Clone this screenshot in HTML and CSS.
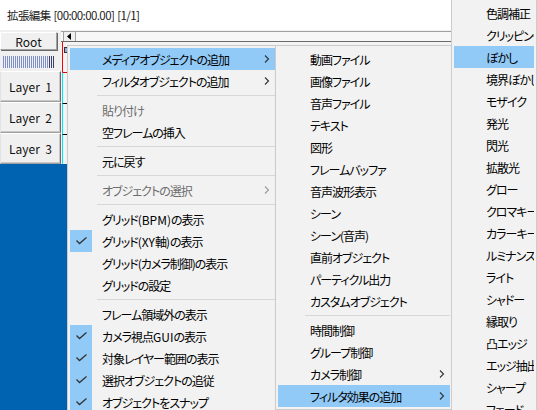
FILE: index.html
```html
<!DOCTYPE html>
<html lang="ja">
<head>
<meta charset="utf-8">
<title>拡張編集</title>
<link rel="stylesheet" href="styles.css">
</head>
<body>
<div class="window">
  <div class="titlebar">拡張編集 [00:00:00.00] [1/1]</div>
  <div class="client">
    <div class="layers">
      <div class="root-btn">Root</div>
      <div class="meter"></div>
      <div class="layer-btn">Layer&nbsp; 1</div>
      <div class="layer-btn">Layer&nbsp; 2</div>
      <div class="layer-btn">Layer&nbsp; 3</div>
    </div>
    <div class="timeline">
      <div class="hscroll">
        <div class="arrow-btn"><svg width="5" height="7" viewBox="0 0 5 7"><path d="M4 0 L0 3.5 L4 7 Z" fill="#000"/></svg></div>
        <div class="track"></div>
      </div>
      <div class="tracks">
        <div class="ruler"><span class="marker"></span></div>
        <div class="lane lane-first"></div>
        <div class="lane"></div>
        <div class="lane lane-last"></div>
      </div>
    </div>
  </div>
</div>

<div class="menu menu-main">
  <div class="item hot"><span class="ck"></span><span class="tx">メディアオブジェクトの追加</span><span class="ar"><svg width="16" height="22" viewBox="0 0 16 22"><path d="M6 7.5 L9.5 11 L6 14.5" fill="none" stroke="#333" stroke-width="1.1"/></svg></span></div>
  <div class="item"><span class="ck"></span><span class="tx">フィルタオブジェクトの追加</span><span class="ar"><svg width="16" height="22" viewBox="0 0 16 22"><path d="M6 7.5 L9.5 11 L6 14.5" fill="none" stroke="#333" stroke-width="1.1"/></svg></span></div>
  <div class="sep"></div>
  <div class="item dis"><span class="ck"></span><span class="tx">貼り付け</span><span class="ar"></span></div>
  <div class="item"><span class="ck"></span><span class="tx">空フレームの挿入</span><span class="ar"></span></div>
  <div class="sep"></div>
  <div class="item"><span class="ck"></span><span class="tx">元に戻す</span><span class="ar"></span></div>
  <div class="sep"></div>
  <div class="item dis"><span class="ck"></span><span class="tx">オブジェクトの選択</span><span class="ar"><svg width="16" height="22" viewBox="0 0 16 22"><path d="M6 7.5 L9.5 11 L6 14.5" fill="none" stroke="#9a9a9a" stroke-width="1.1"/></svg></span></div>
  <div class="sep"></div>
  <div class="item"><span class="ck"></span><span class="tx">グリッド<span class="lat">(BPM)</span>の表示</span><span class="ar"></span></div>
  <div class="item"><span class="ck on"><svg width="22" height="22" viewBox="0 0 22 22"><path d="M6.5 10.5 L9.5 13.5 L16.5 7.5" fill="none" stroke="#333" stroke-width="1.3"/></svg></span><span class="tx">グリッド<span class="lat">(XY</span>軸<span class="lat">)</span>の表示</span><span class="ar"></span></div>
  <div class="item"><span class="ck"></span><span class="tx">グリッド(カメラ制御)の表示</span><span class="ar"></span></div>
  <div class="item"><span class="ck"></span><span class="tx">グリッドの設定</span><span class="ar"></span></div>
  <div class="sep"></div>
  <div class="item"><span class="ck"></span><span class="tx">フレーム領域外の表示</span><span class="ar"></span></div>
  <div class="item"><span class="ck on"><svg width="22" height="22" viewBox="0 0 22 22"><path d="M6.5 10.5 L9.5 13.5 L16.5 7.5" fill="none" stroke="#333" stroke-width="1.3"/></svg></span><span class="tx">カメラ視点<span class="lat">GUI</span>の表示</span><span class="ar"></span></div>
  <div class="item"><span class="ck on"><svg width="22" height="22" viewBox="0 0 22 22"><path d="M6.5 10.5 L9.5 13.5 L16.5 7.5" fill="none" stroke="#333" stroke-width="1.3"/></svg></span><span class="tx">対象レイヤー範囲の表示</span><span class="ar"></span></div>
  <div class="item"><span class="ck on"><svg width="22" height="22" viewBox="0 0 22 22"><path d="M6.5 10.5 L9.5 13.5 L16.5 7.5" fill="none" stroke="#333" stroke-width="1.3"/></svg></span><span class="tx">選択オブジェクトの追従</span><span class="ar"></span></div>
  <div class="item"><span class="ck on"><svg width="22" height="22" viewBox="0 0 22 22"><path d="M6.5 10.5 L9.5 13.5 L16.5 7.5" fill="none" stroke="#333" stroke-width="1.3"/></svg></span><span class="tx">オブジェクトをスナップ</span><span class="ar"></span></div>
</div>

<div class="menu menu-media">
  <div class="item"><span class="ck"></span><span class="tx">動画ファイル</span><span class="ar"></span></div>
  <div class="item"><span class="ck"></span><span class="tx">画像ファイル</span><span class="ar"></span></div>
  <div class="item"><span class="ck"></span><span class="tx">音声ファイル</span><span class="ar"></span></div>
  <div class="item"><span class="ck"></span><span class="tx">テキスト</span><span class="ar"></span></div>
  <div class="item"><span class="ck"></span><span class="tx">図形</span><span class="ar"></span></div>
  <div class="item"><span class="ck"></span><span class="tx">フレームバッファ</span><span class="ar"></span></div>
  <div class="item"><span class="ck"></span><span class="tx">音声波形表示</span><span class="ar"></span></div>
  <div class="item"><span class="ck"></span><span class="tx">シーン</span><span class="ar"></span></div>
  <div class="item"><span class="ck"></span><span class="tx">シーン(音声)</span><span class="ar"></span></div>
  <div class="item"><span class="ck"></span><span class="tx">直前オブジェクト</span><span class="ar"></span></div>
  <div class="item"><span class="ck"></span><span class="tx">パーティクル出力</span><span class="ar"></span></div>
  <div class="item"><span class="ck"></span><span class="tx">カスタムオブジェクト</span><span class="ar"></span></div>
  <div class="sep"></div>
  <div class="item"><span class="ck"></span><span class="tx">時間制御</span><span class="ar"></span></div>
  <div class="item"><span class="ck"></span><span class="tx">グループ制御</span><span class="ar"></span></div>
  <div class="item"><span class="ck"></span><span class="tx">カメラ制御</span><span class="ar"><svg width="16" height="22" viewBox="0 0 16 22"><path d="M6 7.5 L9.5 11 L6 14.5" fill="none" stroke="#333" stroke-width="1.1"/></svg></span></div>
  <div class="item hot"><span class="ck"></span><span class="tx">フィルタ効果の追加</span><span class="ar"><svg width="16" height="22" viewBox="0 0 16 22"><path d="M6 7.5 L9.5 11 L6 14.5" fill="none" stroke="#333" stroke-width="1.1"/></svg></span></div>
</div>

<div class="menu menu-filter">
  <div class="item"><span class="ck"></span><span class="tx">色調補正</span></div>
  <div class="item"><span class="ck"></span><span class="tx">クリッピング</span></div>
  <div class="item hot"><span class="ck"></span><span class="tx">ぼかし</span></div>
  <div class="item"><span class="ck"></span><span class="tx">境界ぼかし</span></div>
  <div class="item"><span class="ck"></span><span class="tx">モザイク</span></div>
  <div class="item"><span class="ck"></span><span class="tx">発光</span></div>
  <div class="item"><span class="ck"></span><span class="tx">閃光</span></div>
  <div class="item"><span class="ck"></span><span class="tx">拡散光</span></div>
  <div class="item"><span class="ck"></span><span class="tx">グロー</span></div>
  <div class="item"><span class="ck"></span><span class="tx">クロマキー</span></div>
  <div class="item"><span class="ck"></span><span class="tx">カラーキー</span></div>
  <div class="item"><span class="ck"></span><span class="tx">ルミナンスキー</span></div>
  <div class="item"><span class="ck"></span><span class="tx">ライト</span></div>
  <div class="item"><span class="ck"></span><span class="tx">シャドー</span></div>
  <div class="item"><span class="ck"></span><span class="tx">縁取り</span></div>
  <div class="item"><span class="ck"></span><span class="tx">凸エッジ</span></div>
  <div class="item"><span class="ck"></span><span class="tx">エッジ抽出</span></div>
  <div class="item"><span class="ck"></span><span class="tx">シャープ</span></div>
  <div class="item"><span class="ck"></span><span class="tx">フェード</span></div>
</div>
</body>
</html>
```
FILE: styles.css
```css
* { box-sizing: border-box; }
html, body { margin: 0; padding: 0; }
body {
  width: 537px;
  height: 410px;
  overflow: hidden;
  position: relative;
  background: #0063b1;
  font-family: "Noto Sans CJK JP", sans-serif;
  font-size: 12px;
  color: #000;
  font-feature-settings: "palt";
}

.window {
  height: 164px;
  background: #f0f0f0;
  display: flex;
  flex-direction: column;
}
.titlebar {
  height: 30px;
  background: #fff;
  padding-left: 7px;
  display: flex;
  align-items: center;
  color: #1a1a1a;
  font-size: 11.5px;
  letter-spacing: -0.6px;
  word-spacing: 1px;
}
.client { flex: 1; display: flex; }

.layers { width: 61px; display: flex; flex-direction: column; }
.root-btn {
  margin-top: 2px;
  width: 57px;
  height: 18px;
  display: flex;
  align-items: center;
  justify-content: center;
  background: #f0f0f0;
  border: 1px solid;
  border-color: #fff #a0a0a0 #a0a0a0 #fff;
  box-shadow: 1px 1px 0 #696969;
  color: #111;
}
.meter {
  margin: 6px 0 3px 3px;
  width: 51px;
  height: 12px;
  background:
    linear-gradient(90deg, transparent 0 45px, #f0f0f0 45px 46px, #3c4070 46px 47px, #f0f0f0 47px 48px, #3c4070 48px 49px, #f0f0f0 49px 50px, #3c4070 50px 51px),
    repeating-linear-gradient(90deg, #8090c4 0 1px, #eef0f8 1px 2px);
}
.layer-btn {
  height: 31px;
  width: 61px;
  display: flex;
  align-items: center;
  justify-content: center;
  background: #f0f0f0;
  border: 1px solid;
  border-color: #fff #696969 #a0a0a0 #e3e3e3;
  box-shadow: inset -1px -1px 0 #c8c8c8;
  padding-bottom: 1px;
  color: #111;
}

.timeline { flex: 1; display: flex; flex-direction: column; }
.hscroll {
  margin-top: 1px;
  height: 11px;
  display: flex;
  border-top: 1px solid #a0a0a0;
  border-bottom: 1px solid #696969;
  background: #f7f7f7;
}
.arrow-btn {
  margin-left: 2px;
  width: 13px;
  display: flex;
  align-items: center;
  justify-content: center;
  background: #f0f0f0;
  border-right: 1px solid #a0a0a0;
  border-left: 1px solid #a0a0a0;
}
.arrow-btn svg { display: block; }
.track { flex: 1; }
.tracks {
  flex: 1;
  display: flex;
  flex-direction: column;
  padding-left: 1px;
  background: #f4f4f4;
}
.ruler {
  height: 30px;
  border-left: 1px solid #ff0000;
  position: relative;
}
.marker {
  position: absolute;
  left: 1px;
  top: 5px;
  width: 3px;
  height: 6px;
  border: 1px solid #333;
  border-right: none;
  background: #8fb0e0;
}
.lane {
  height: 31px;
  border-left: 1px solid #00e8f0;
  border-top: 1px solid #000;
}
.lane-first { border-top-color: #e00000; }
.lane-last { flex: 1; }

/* menus */
.menu {
  position: absolute;
  background: #f2f2f2;
  border: 1px solid #cccccc;
  padding: 2px;
  box-shadow: 2px 2px 3px rgba(0, 0, 0, 0.22);
  letter-spacing: -1px;
}
.menu-main { left: 67px; top: 45px; width: 211px; }
.menu-media { left: 275px; top: 45px; width: 178px; }
.menu-filter { left: 451px; top: -1px; width: 86px; overflow: hidden; box-shadow: none; }

.item {
  height: 22px;
  display: flex;
  align-items: center;
  white-space: nowrap;
}
.item.hot { background: #91c9f7; }
.item.dis { color: #6d6d6d; }
.ck {
  width: 22px;
  height: 22px;
  flex: none;
}
.ck svg { display: block; }
.ck.on { background: #91c9f7; }
.tx { flex: 1; padding-left: 10px; overflow: hidden; }
.lat { letter-spacing: 0; }
.ar { width: 16px; height: 22px; flex: none; }
.ar svg { display: block; }
.sep {
  margin: 3px 0 3px 27px;
  height: 1px;
  background: #d7d7d7;
}
```
